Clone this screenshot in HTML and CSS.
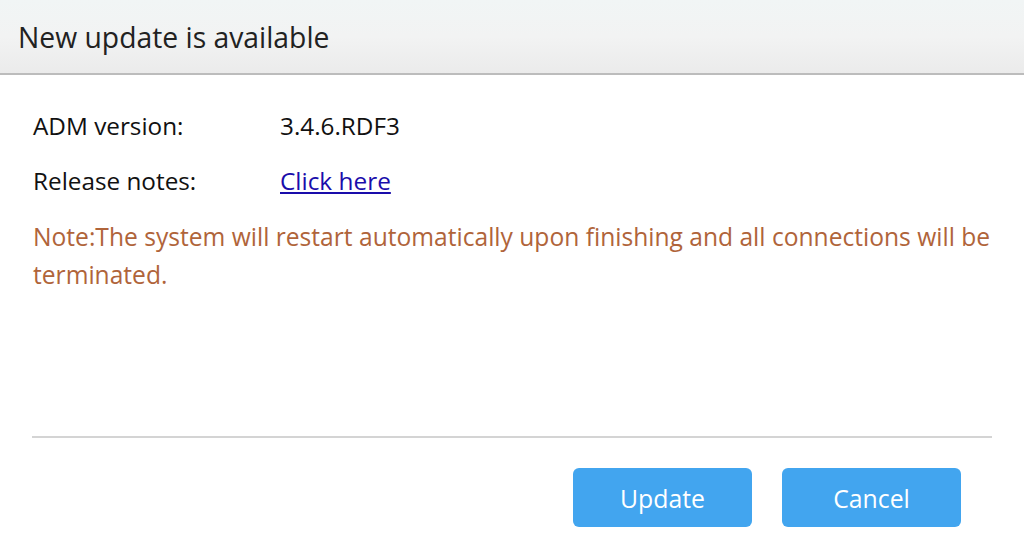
FILE: index.html
```html
<!DOCTYPE html>
<html lang="en">
<head>
    <meta charset="utf-8">
    <title>New update is available</title>
    <link rel="stylesheet" href="styles.css">
</head>
<body>
    <div class="dialog">
        <div class="header">New update is available</div>
        <div class="content">
            <div class="row">
                <span class="label">ADM version:</span>
                <span class="value">3.4.6.RDF3</span>
            </div>
            <div class="row">
                <span class="label">Release notes:</span>
                <a class="value link" href="#">Click here</a>
            </div>
            <div class="note">Note:The system will restart automatically upon finishing and all connections will be terminated.</div>
        </div>
        <div class="footer">
            <button class="btn">Update</button>
            <button class="btn">Cancel</button>
        </div>
    </div>
</body>
</html>
```

FILE: styles.css
```css
* {
    font-family: 'Open Sans', 'Noto Sans', sans-serif;
    box-sizing: border-box;
}
html, body {
    margin: 0;
    height: 100%;
    background: #fff;
    overflow: hidden;
}
.dialog {
    display: flex;
    flex-direction: column;
    height: 100%;
}
.header {
    height: 75px;
    padding: 17px 0 0 18px;
    font-size: 28.3px;
    line-height: 40px;
    color: #222;
    background: linear-gradient(to bottom, #f1f5f5 0%, #f2f3f3 50%, #ebebeb 100%);
    border-bottom: 2px solid #bcbcbc;
}
.content {
    flex: 1;
    padding: 33px 33px 0 33px;
}
.row {
    display: flex;
    height: 55px;
    line-height: 36px;
    font-size: 24.3px;
    color: #111;
}
.label {
    width: 247px;
}
.link {
    color: #1a0dab;
    text-decoration: underline;
    font-size: 24.4px;
}
.note {
    font-size: 24.6px;
    line-height: 38px;
    color: #b0643a;
}
.footer {
    margin: 0 32px;
    border-top: 2px solid #d4d4d4;
    height: 117px;
    display: flex;
    justify-content: flex-end;
    gap: 30px;
    padding: 30px 31px 0 0;
}
.btn {
    width: 179px;
    height: 59px;
    border: none;
    border-radius: 6px;
    background: #42a5ef;
    color: #fff;
    font-size: 24.8px;
}
```
